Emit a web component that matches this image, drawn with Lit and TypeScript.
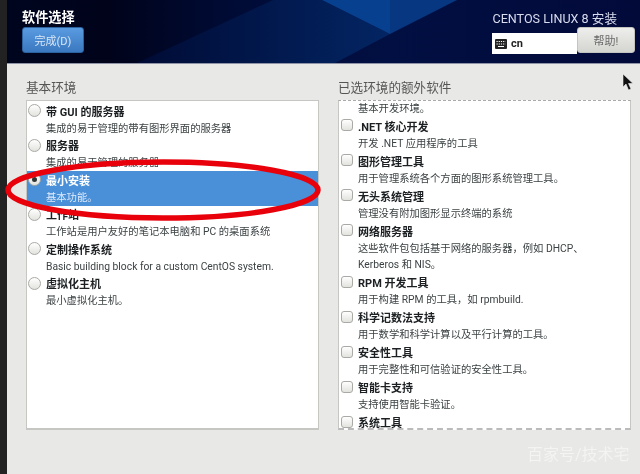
import { LitElement, html, css, svg } from 'lit'
import { customElement } from 'lit/decorators.js'

const environments = [
  { title: '带 GUI 的服务器', desc: '集成的易于管理的带有图形界面的服务器' },
  { title: '服务器', desc: '集成的易于管理的服务器' },
  { title: '最小安装', desc: '基本功能。', selected: true },
  { title: '工作站', desc: '工作站是用户友好的笔记本电脑和 PC 的桌面系统' },
  { title: '定制操作系统', desc: 'Basic building block for a custom CentOS system.' },
  { title: '虚拟化主机', desc: '最小虚拟化主机。' }
]

const addons = [
  { title: '.NET 核心开发', desc: '开发 .NET 应用程序的工具' },
  { title: '图形管理工具', desc: '用于管理系统各个方面的图形系统管理工具。' },
  { title: '无头系统管理', desc: '管理没有附加图形显示终端的系统' },
  { title: '网络服务器', desc: '这些软件包包括基于网络的服务器，例如 DHCP、Kerberos 和 NIS。', tall: true },
  { title: 'RPM 开发工具', desc: '用于构建 RPM 的工具，如 rpmbuild.' },
  { title: '科学记数法支持', desc: '用于数学和科学计算以及平行计算的工具。' },
  { title: '安全性工具', desc: '用于完整性和可信验证的安全性工具。' },
  { title: '智能卡支持', desc: '支持使用智能卡验证。' },
  { title: '系统工具', desc: '' }
]

@customElement('app-root')
export class AppRoot extends LitElement {
  static styles = css`
    :host {
      display: block;
      width: 640px;
      height: 474px;
      overflow: hidden;
      font-family: Roboto, 'Noto Sans CJK SC', sans-serif;
    }

    .screen {
      position: relative;
      display: flex;
      height: 474px;
      background: #e8e8e6;
      filter: blur(0.35px);
    }

    .rail {
      width: 7px;
      flex: none;
      background: #222;
    }

    .main {
      flex: 1;
      min-width: 0;
    }

    .header {
      position: relative;
      display: flex;
      justify-content: space-between;
      height: 64px;
      padding: 10px 5px 0 15px;
      box-sizing: border-box;
      overflow: hidden;
      background: #020b33;
      border-bottom: 1px solid #8f93a8;
      color: #fff;
    }

    .backdrop {
      position: absolute;
      inset: 0;
      width: 100%;
      height: 100%;
    }

    .head-left,
    .head-right {
      position: relative;
      display: flex;
      flex-direction: column;
    }

    .head-left h1 {
      margin: 0 0 1px;
      font-size: 13.2px;
      line-height: 16px;
      font-weight: 700;
    }

    .done {
      width: 62px;
      height: 26px;
      border: 1px solid #2b629f;
      border-radius: 3px;
      background: linear-gradient(#5a9be0, #3a78c0);
      color: #d8e6f6;
      font: inherit;
      font-size: 11px;
      padding: 0;
    }

    .product {
      margin: 1px 18px 0 0;
      align-self: flex-end;
      font-size: 12.6px;
      line-height: 16px;
      color: #d9dcee;
    }

    .tools {
      display: flex;
      align-items: flex-start;
    }

    .kb {
      display: flex;
      align-items: center;
      gap: 4px;
      width: 85px;
      height: 21px;
      margin-top: 6px;
      padding-left: 3px;
      box-sizing: border-box;
      background: #fff;
      color: #222;
      font-size: 11px;
      font-weight: 700;
    }

    .help {
      width: 58px;
      height: 26px;
      border: 1px solid #c4c4c0;
      border-radius: 3px;
      background: linear-gradient(#eeeeec, #d4d4d0);
      color: #6a6a6a;
      font: inherit;
      font-size: 11px;
      padding: 0;
    }

    .panes {
      display: grid;
      grid-template-columns: 293px 293px;
      column-gap: 19px;
      padding: 15px 0 0 19px;
    }

    h2 {
      margin: 0 0 3px;
      font-size: 12.6px;
      line-height: 18px;
      font-weight: 400;
      color: #555;
    }

    .list {
      height: 330px;
      box-sizing: border-box;
      overflow: hidden;
      background: #fff;
      border: 1px solid #c6c6c2;
      border-bottom-width: 2px;
      padding-top: 1px;
      color: #1c2022;
    }

    .list.scrolled {
      border-top: 1px dashed #aaa;
      border-bottom: 2px dashed #bbb;
    }

    .row {
      display: grid;
      grid-template-columns: 18px 1fr;
      padding: 1.5px 0 0 1px;
      height: 34.5px;
      box-sizing: border-box;
    }

    .addons .row {
      height: 35px;
      padding-left: 2px;
      grid-template-columns: 17px 1fr;
    }

    .addons .row.tall {
      height: 51.5px;
    }

    .addons .desc {
      padding-right: 15px;
    }

    .row.selected {
      background: #4a90d9;
      color: #fff;
    }

    .title {
      font-size: 11px;
      line-height: 17px;
      font-weight: 700;
    }

    .desc {
      font-size: 10.3px;
      line-height: 16px;
      color: #3c4244;
    }

    .selected .desc {
      color: #dfeafa;
    }

    .addons .orphan {
      height: 15px;
      line-height: 14px;
      padding-left: 19px;
    }

    .radio {
      width: 13px;
      height: 13px;
      margin-top: 0.5px;
      border-radius: 50%;
      box-sizing: border-box;
      border: 1px solid #a9a9a5;
      background: linear-gradient(#fff, #e2e2de);
      display: flex;
      align-items: center;
      justify-content: center;
    }

    .radio.on::after {
      content: '';
      width: 5px;
      height: 5px;
      border-radius: 50%;
      background: #2e3436;
    }

    .check {
      width: 12px;
      height: 12px;
      margin-top: 0.5px;
      border-radius: 3px;
      box-sizing: border-box;
      border: 1px solid #a9a9a5;
      background: linear-gradient(#fff, #e2e2de);
    }

    .ring {
      position: absolute;
      left: 0;
      top: 150px;
      width: 330px;
      height: 80px;
      pointer-events: none;
    }

    .pointer {
      position: absolute;
      left: 622px;
      top: 73px;
      width: 12px;
      height: 18px;
    }

    .mark {
      position: absolute;
      left: 527px;
      top: 445px;
      font-size: 16px;
      line-height: 20px;
      color: rgba(255, 255, 255, 0.5);
      white-space: nowrap;
    }
  `

  renderRow(item: any, control: unknown) {
    return html`
      <div class="row ${item.selected ? 'selected' : ''} ${item.tall ? 'tall' : ''}">
        ${control}
        <div>
          <div class="title">${item.title}</div>
          ${item.desc ? html`<div class="desc">${item.desc}</div>` : ''}
        </div>
      </div>
    `
  }

  render() {
    return html`
      <div class="screen">
        <div class="rail"></div>
        <div class="main">
          <header class="header">
            <svg class="backdrop" viewBox="0 0 633 63" preserveAspectRatio="none">
              ${svg`
                <defs>
                  <linearGradient id="sky" x1="0" x2="1" y1="0" y2="0">
                    <stop offset="0" stop-color="#00051f"/>
                    <stop offset="0.16" stop-color="#00031a"/>
                    <stop offset="0.35" stop-color="#000b35"/>
                    <stop offset="0.6" stop-color="#020f42"/>
                    <stop offset="1" stop-color="#020a3a"/>
                  </linearGradient>
                  <linearGradient id="wedge" x1="0" x2="1" y1="0" y2="0">
                    <stop offset="0" stop-color="#000b35"/>
                    <stop offset="1" stop-color="#032563"/>
                  </linearGradient>
                </defs>
                <rect width="633" height="63" fill="url(#sky)"/>
                <polygon points="266,0 315,0 383,34 328,63 130,63" fill="url(#wedge)"/>
                <polygon points="315,0 383,0 383,34" fill="#07408f"/>
                <polygon points="383,0 450,0 383,34" fill="#063780"/>
              `}
            </svg>
            <div class="head-left">
              <h1>软件选择</h1>
              <button class="done">完成(D)</button>
            </div>
            <div class="head-right">
              <p class="product">CENTOS LINUX 8 安装</p>
              <div class="tools">
                <div class="kb">
                  <svg width="12" height="10" viewBox="0 0 12 10">
                    <rect width="12" height="10" rx="1" fill="#222"/>
                    <path d="M1.5 2.5h9M1.5 5h9" stroke="#fff" stroke-width="1" stroke-dasharray="1.2 1"/>
                    <path d="M3 7.5h6" stroke="#fff" stroke-width="1"/>
                  </svg>
                  <span>cn</span>
                </div>
                <button class="help">帮助!</button>
              </div>
            </div>
          </header>
          <div class="panes">
            <section>
              <h2>基本环境</h2>
              <div class="list">
                ${environments.map(e =>
                  this.renderRow(e, html`<span class="radio ${e.selected ? 'on' : ''}"></span>`)
                )}
              </div>
            </section>
            <section>
              <h2>已选环境的额外软件</h2>
              <div class="list scrolled addons">
                <div class="desc orphan">基本开发环境。</div>
                ${addons.map(a => this.renderRow(a, html`<span class="check"></span>`))}
              </div>
            </section>
          </div>
        </div>

        <svg class="ring" viewBox="0 0 330 80">
          <ellipse cx="163" cy="40" rx="155" ry="28" fill="none" stroke="#e8000b" stroke-width="5.5"/>
        </svg>
        <svg class="pointer" viewBox="0 0 12 18">
          <path d="M1 1 L1 14 L4 11 L6.5 17 L9 16 L6.5 10.5 L11 10.5 Z" fill="#111" stroke="#eee" stroke-width="0.6"/>
        </svg>
        <div class="mark">百家号/技术宅</div>
      </div>
    `
  }
}
